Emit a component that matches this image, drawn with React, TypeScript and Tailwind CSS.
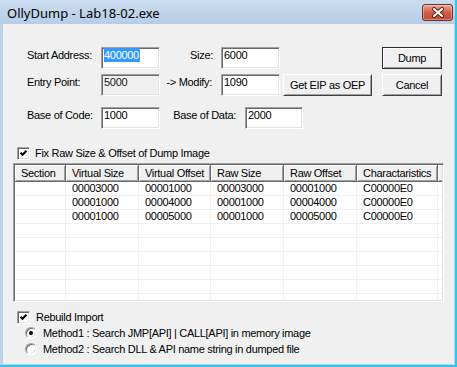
import React from 'react'

const ui = "font-['Liberation_Sans',Arial,sans-serif] text-[11px] leading-[13px] tracking-[-0.3px] text-black"

const sunken =
  'border border-t-[#a0a0a0] border-l-[#a0a0a0] border-r-white border-b-white shadow-[inset_1px_1px_0_#696969,inset_-1px_-1px_0_#e3e3e3]'

function Label({ w, right, pr, children }: { w: string; right?: boolean; pr?: string; children: React.ReactNode }) {
  return (
    <div className={`${w} ${right ? 'text-right' : ''} ${pr ?? ''} pt-[2px] whitespace-nowrap`}>{children}</div>
  )
}

function Field({ w, value, selected, disabled }: { w: string; value: string; selected?: boolean; disabled?: boolean }) {
  return (
    <div className={`${w} h-[22px] ${sunken} ${disabled ? 'bg-[#f0f0f0]' : 'bg-white'} px-[2px] pt-[1px] self-start`}>
      {selected ? (
        <span className="bg-[#3399ff] text-white pr-[1px] py-[1px]">{value}</span>
      ) : (
        <span className={disabled ? 'text-[#1a1a1a]' : ''}>{value}</span>
      )}
    </div>
  )
}

function Button({ w, children, def }: { w: string; children: React.ReactNode; def?: boolean }) {
  return (
    <div
      className={`${w} h-[22px] flex items-center justify-center bg-[#f0f0f0] border ${
        def ? 'border-[#2a2a2a]' : 'border-t-white border-l-white border-r-[#404040] border-b-[#404040]'
      } ${
        def
          ? 'shadow-[inset_1px_1px_0_white,inset_-1px_-1px_0_#a0a0a0]'
          : 'shadow-[inset_1px_1px_0_#f0f0f0,inset_-1px_-1px_0_#a0a0a0]'
      } self-start`}
    >
      {children}
    </div>
  )
}

function Checkbox() {
  return (
    <div className={`w-[13px] h-[13px] bg-white ${sunken} flex items-center justify-center shrink-0`}>
      <svg width="9" height="9" viewBox="0 0 9 9">
        <path d="M1.5 3.8 L3.5 5.8 L7.5 1.8" fill="none" stroke="#000" strokeWidth="2" />
      </svg>
    </div>
  )
}

function Radio({ checked }: { checked?: boolean }) {
  return (
    <div className="w-[12px] h-[12px] rounded-full border border-t-[#a0a0a0] border-l-[#a0a0a0] border-r-white border-b-white shadow-[inset_1px_1px_0_#696969,inset_-1px_-1px_0_#e3e3e3] bg-white flex items-center justify-center shrink-0">
      {checked && <div className="w-[4px] h-[4px] rounded-full bg-black" />}
    </div>
  )
}

const cols = [
  { name: 'Section', w: 'w-[51px]' },
  { name: 'Virtual Size', w: 'w-[73px]' },
  { name: 'Virtual Offset', w: 'w-[72px]' },
  { name: 'Raw Size', w: 'w-[73px]' },
  { name: 'Raw Offset', w: 'w-[73px]' },
  { name: 'Charactaristics', w: 'w-[81px]' },
]

const rows = [
  ['', '00003000', '00001000', '00003000', '00001000', 'C00000E0'],
  ['', '00001000', '00004000', '00001000', '00004000', 'C00000E0'],
  ['', '00001000', '00005000', '00001000', '00005000', 'C00000E0'],
  ['', '', '', '', '', ''],
  ['', '', '', '', '', ''],
  ['', '', '', '', '', ''],
  ['', '', '', '', '', ''],
  ['', '', '', '', '', ''],
  ['', '', '', '', '', ''],
]

function SectionTable() {
  return (
    <div className={`ml-[10px] mt-[3px] w-[431px] h-[139px] bg-white ${sunken} p-[1px] overflow-hidden`}>
      <div className="flex h-[17px] bg-[#f0f0f0]">
        {cols.map((c) => (
          <div
            key={c.name}
            className={`${c.w} shrink-0 h-full pl-[6px] pt-[2px] border-r border-b border-[#696969] shadow-[inset_1px_1px_0_white,inset_-1px_-1px_0_#a0a0a0] whitespace-nowrap overflow-hidden`}
          >
            {c.name}
          </div>
        ))}
        <div className="flex-1 h-full border-b border-[#696969] shadow-[inset_1px_1px_0_white,inset_0_-1px_0_#a0a0a0]" />
      </div>
      {rows.map((r, i) => (
        <div key={i} className="flex h-[14px] border-b border-[#f0f0f0]">
          {r.map((v, j) => (
            <div key={j} className={`${cols[j].w} shrink-0 h-full pl-[6px] border-r border-[#f0f0f0] whitespace-nowrap`}>
              {v}
            </div>
          ))}
          <div className="flex-1" />
        </div>
      ))}
    </div>
  )
}

export default function App() {
  return (
    <div className="w-[457px] h-[367px] flex flex-col bg-[#bdd2ea] border-r-2 border-b-2 border-[#2cc7f1] overflow-hidden">
      {/* Title bar */}
      <div className="h-[24px] flex items-start bg-gradient-to-b from-[#cadcef] to-[#b7cde7] pl-[7px] pr-[2px] shrink-0">
        <div className="pt-[5px] font-['Noto_Sans',sans-serif] text-[13px] leading-[16px] text-black whitespace-nowrap">
          OllyDump - Lab18-02.exe
        </div>
        <div className="ml-auto mt-[4px] w-[31px] h-[17px] rounded-[3px] border border-[#7a2a20] bg-gradient-to-b from-[#e6a89b] via-[#cf5d48] to-[#c44a33] shadow-[inset_0_0_0_1px_rgba(255,255,255,0.35)] flex items-center justify-center">
          <svg width="14" height="11" viewBox="0 0 14 11">
            <path d="M3 2 L11 9 M11 2 L3 9" stroke="#5b2018" strokeWidth="4" strokeLinecap="round" />
            <path d="M3 2 L11 9 M11 2 L3 9" stroke="#fff" strokeWidth="2.2" strokeLinecap="round" />
          </svg>
        </div>
      </div>

      {/* Client area */}
      <div className={`flex-1 ml-[3px] mr-[1px] mb-[1px] bg-[#f0f0f0] flex flex-col ${ui}`}>
        <div className="flex mt-[23px] pl-[24px]">
          <Label w="w-[74px]">Start Address:</Label>
          <Field w="w-[59px]" value="400000" selected />
          <Label w="w-[61px]" right pr="pr-[8px]">Size:</Label>
          <Field w="w-[59px]" value="6000" />
          <div className="w-[102px]" />
          <Button w="w-[60px]" def>Dump</Button>
        </div>

        <div className="flex mt-[5px] pl-[24px]">
          <Label w="w-[74px]">Entry Point:</Label>
          <Field w="w-[59px]" value="5000" disabled />
          <Label w="w-[61px]" right pr="pr-[9px]">-&gt; Modify:</Label>
          <Field w="w-[59px]" value="1090" />
          <div className="w-[3px]" />
          <Button w="w-[89px]">Get EIP as OEP</Button>
          <div className="w-[10px]" />
          <Button w="w-[60px]">Cancel</Button>
        </div>

        <div className="flex mt-[11px] pl-[24px]">
          <Label w="w-[74px]">Base of Code:</Label>
          <Field w="w-[59px]" value="1000" />
          <Label w="w-[85px]" right pr="pr-[9px]">Base of Data:</Label>
          <Field w="w-[58px]" value="2000" />
        </div>

        <div className="flex items-center mt-[18px] pl-[14px] h-[13px]">
          <Checkbox />
          <span className="ml-[5px] whitespace-nowrap">Fix Raw Size &amp; Offset of Dump Image</span>
        </div>

        <SectionTable />

        <div className="flex items-center mt-[9px] pl-[14px] h-[13px]">
          <Checkbox />
          <span className="ml-[6px] whitespace-nowrap">Rebuild Import</span>
        </div>

        <div className="flex items-center mt-[1px] pl-[22px] h-[16px]">
          <Radio checked />
          <span className="ml-[6px] whitespace-nowrap">Method1 : Search JMP[API] | CALL[API] in memory image</span>
        </div>
        <div className="flex items-center pl-[22px] h-[16px]">
          <Radio />
          <span className="ml-[6px] whitespace-nowrap">Method2 : Search DLL &amp; API name string in dumped file</span>
        </div>
      </div>
    </div>
  )
}
